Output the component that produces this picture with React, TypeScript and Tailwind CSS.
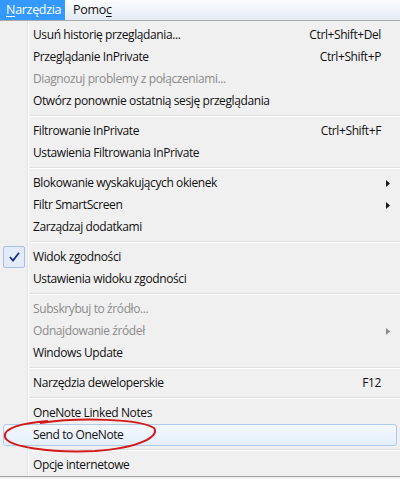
import React from "react";

type Item =
  | { kind: "sep" }
  | {
      kind: "item";
      label: string;
      shortcut?: string;
      disabled?: boolean;
      submenu?: boolean;
      checked?: boolean;
      hover?: boolean;
    };

const items: Item[] = [
  { kind: "item", label: "Usuń historię przeglądania...", shortcut: "Ctrl+Shift+Del" },
  { kind: "item", label: "Przeglądanie InPrivate", shortcut: "Ctrl+Shift+P" },
  { kind: "item", label: "Diagnozuj problemy z połączeniami...", disabled: true },
  { kind: "item", label: "Otwórz ponownie ostatnią sesję przeglądania" },
  { kind: "sep" },
  { kind: "item", label: "Filtrowanie InPrivate", shortcut: "Ctrl+Shift+F" },
  { kind: "item", label: "Ustawienia Filtrowania InPrivate" },
  { kind: "sep" },
  { kind: "item", label: "Blokowanie wyskakujących okienek", submenu: true },
  { kind: "item", label: "Filtr SmartScreen", submenu: true },
  { kind: "item", label: "Zarządzaj dodatkami" },
  { kind: "sep" },
  { kind: "item", label: "Widok zgodności", checked: true },
  { kind: "item", label: "Ustawienia widoku zgodności" },
  { kind: "sep" },
  { kind: "item", label: "Subskrybuj to źródło...", disabled: true },
  { kind: "item", label: "Odnajdowanie źródeł", disabled: true, submenu: true },
  { kind: "item", label: "Windows Update" },
  { kind: "sep" },
  { kind: "item", label: "Narzędzia deweloperskie", shortcut: "F12" },
  { kind: "sep" },
  { kind: "item", label: "OneNote Linked Notes" },
  { kind: "item", label: "Send to OneNote", hover: true },
  { kind: "sep" },
  { kind: "item", label: "Opcje internetowe" },
];

function Arrow({ disabled }: { disabled?: boolean }) {
  return (
    <svg width="4" height="7" viewBox="0 0 4 7" className="block">
      <path d="M0 0 L4 3.5 L0 7 Z" fill={disabled ? "#8a8a8a" : "#1a1a1a"} />
    </svg>
  );
}

function Row({ it }: { it: Extract<Item, { kind: "item" }> }) {
  const color = it.disabled ? "text-[#8b8b8b]" : "text-[#111111]";
  if (it.hover) {
    return (
      <div className="h-[22px] mx-[3px] flex items-center rounded-[3px] border border-[#aecbed] bg-gradient-to-b from-[#f4f8fe] to-[#e5eefa] relative">
        <div className="w-[29px] shrink-0" />
        <div className={`flex-1 ${color}`}>{it.label}</div>
      </div>
    );
  }
  return (
    <div className="h-[22px] flex items-center relative">
      <div className="w-[33px] shrink-0 h-full flex items-center">
        {it.checked && (
          <div className="ml-[3px] w-[22px] h-[22px] border border-[#a9bfe2] bg-[#e2ebf9] rounded-[2px] flex items-center justify-center">
            <svg width="11" height="10" viewBox="0 0 11 10">
              <path d="M1 5 L4 8.5 L10 0.8" fill="none" stroke="#1c2b8a" strokeWidth="1.8" />
            </svg>
          </div>
        )}
      </div>
      <div className={`flex-1 whitespace-nowrap ${color}`}>{it.label}</div>
      {it.shortcut && <div className={`pr-[19px] whitespace-nowrap ${color}`}>{it.shortcut}</div>}
      {it.submenu && (
        <div className="pr-[10px] flex items-center">
          <Arrow disabled={it.disabled} />
        </div>
      )}
    </div>
  );
}

export default function App() {
  return (
    <div
      className="w-[400px] h-[479px] overflow-hidden relative bg-[#f0f0f0] text-[12px] tracking-[-0.4px]"
      style={{ fontFamily: '"Open Sans", "Noto Sans", sans-serif' }}
    >
      {/* Menu bar */}
      <div className="h-[21px] flex items-stretch border-b border-[#a7abb0] bg-gradient-to-b from-[#fbfcfe] to-[#e4ebf5]">
        <div className="w-[65px] bg-[#3399ff] text-white flex items-center pl-[6px] text-[12.5px] tracking-[-0.3px]">
          <span>
            <span className="underline underline-offset-2">N</span>arzędzia
          </span>
        </div>
        <div className="flex items-center pl-[8px] text-[12.5px] tracking-[-0.3px] text-[#111111]">
          <span>
            Pomo<span className="underline underline-offset-2">c</span>
          </span>
        </div>
      </div>

      {/* Menu panel */}
      <div className="relative pt-[3px] border-b border-[#a0a0a0]">
        <div className="absolute left-[27px] top-0 bottom-0 w-[2px] border-l border-[#e2e3e3] bg-white" />
        {items.map((it, i) =>
          it.kind === "sep" ? (
            <div key={i} className="h-[8px] flex flex-col justify-center pl-[30px] relative">
              <div className="h-[1px] bg-[#e0e0e0]" />
              <div className="h-[1px] bg-white" />
            </div>
          ) : (
            <Row key={i} it={it} />
          )
        )}
      </div>

      {/* Red hand-drawn ellipse */}
      <svg className="absolute left-0 top-0 pointer-events-none" width="400" height="479">
        <path
          d="M40 423 C 80 417, 140 419, 154 428 C 160 436, 140 448, 95 451 C 50 453, 8 447, 5 437 C 3 428, 22 423, 48 421"
          fill="none"
          stroke="#d11a1a"
          strokeWidth="2"
        />
      </svg>
    </div>
  );
}
